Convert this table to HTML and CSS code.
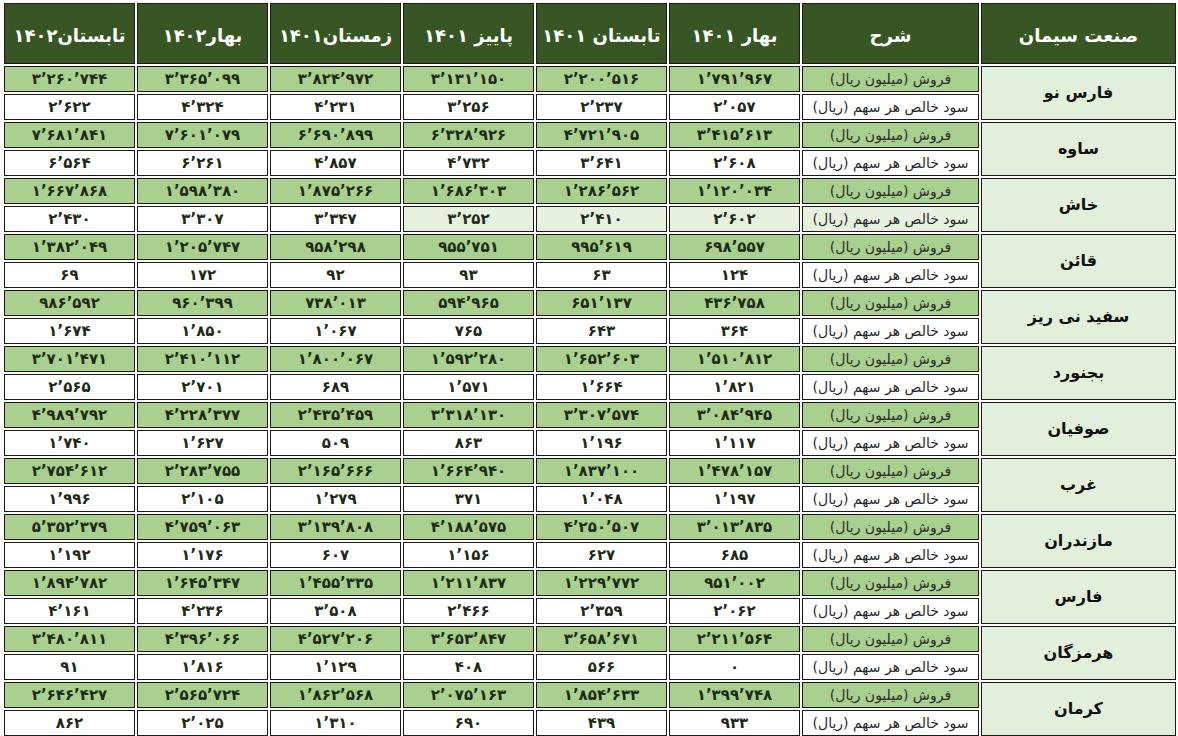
FILE: index.html
```html
<!DOCTYPE html>
<html lang="fa">
<head>
<meta charset="utf-8">
<title>صنعت سیمان</title>
<link rel="stylesheet" href="styles.css">
</head>
<body>
<table class="grid" dir="rtl">
<colgroup>
<col class="c-name"><col class="c-desc"><col class="c-num"><col class="c-num"><col class="c-num"><col class="c-num"><col class="c-num"><col class="c-num">
</colgroup>
<thead>
<tr><th>صنعت سیمان</th><th>شرح</th><th>بهار ۱۴۰۱</th><th>تابستان ۱۴۰۱</th><th>پاییز ۱۴۰۱</th><th>زمستان۱۴۰۱</th><th>بهار۱۴۰۲</th><th>تابستان۱۴۰۲</th></tr>
</thead>
<tbody>
<tr class="sales"><td class="name" rowspan="2">فارس نو</td><td class="desc">فروش (میلیون ریال)</td><td class="n">۱’۷۹۱’۹۶۷</td><td class="n">۲’۲۰۰’۵۱۶</td><td class="n">۳’۱۳۱’۱۵۰</td><td class="n">۳’۸۲۴’۹۷۲</td><td class="n">۳’۳۶۵’۰۹۹</td><td class="n">۳’۲۶۰’۷۴۴</td></tr>
<tr class="eps"><td class="desc">سود خالص هر سهم (ریال)</td><td class="n">۲’۰۵۷</td><td class="n">۲’۲۳۷</td><td class="n">۳’۲۵۶</td><td class="n">۴’۲۳۱</td><td class="n">۴’۳۲۴</td><td class="n">۲’۶۲۲</td></tr>

<tr class="sales"><td class="name" rowspan="2">ساوه</td><td class="desc">فروش (میلیون ریال)</td><td class="n">۳’۴۱۵’۶۱۳</td><td class="n">۴’۷۲۱’۹۰۵</td><td class="n">۶’۳۲۸’۹۲۶</td><td class="n">۶’۶۹۰’۸۹۹</td><td class="n">۷’۶۰۱’۰۷۹</td><td class="n">۷’۶۸۱’۸۴۱</td></tr>
<tr class="eps"><td class="desc">سود خالص هر سهم (ریال)</td><td class="n">۲’۶۰۸</td><td class="n">۳’۶۴۱</td><td class="n">۴’۷۳۲</td><td class="n">۴’۸۵۷</td><td class="n">۶’۲۶۱</td><td class="n">۶’۵۶۴</td></tr>

<tr class="sales"><td class="name" rowspan="2">خاش</td><td class="desc">فروش (میلیون ریال)</td><td class="n">۱’۱۲۰’۰۳۴</td><td class="n">۱’۲۸۶’۵۶۲</td><td class="n">۱’۶۸۶’۳۰۳</td><td class="n">۱’۸۷۵’۲۶۶</td><td class="n">۱’۵۹۸’۳۸۰</td><td class="n">۱’۶۶۷’۸۶۸</td></tr>
<tr class="eps"><td class="desc tint">سود خالص هر سهم (ریال)</td><td class="n tint">۲’۶۰۲</td><td class="n tint">۲’۴۱۰</td><td class="n tint">۳’۲۵۲</td><td class="n">۳’۳۴۷</td><td class="n">۳’۳۰۷</td><td class="n">۲’۴۳۰</td></tr>

<tr class="sales"><td class="name" rowspan="2">قائن</td><td class="desc">فروش (میلیون ریال)</td><td class="n">۶۹۸’۵۵۷</td><td class="n">۹۹۵’۶۱۹</td><td class="n">۹۵۵’۷۵۱</td><td class="n">۹۵۸’۲۹۸</td><td class="n">۱’۲۰۵’۷۴۷</td><td class="n">۱’۳۸۲’۰۴۹</td></tr>
<tr class="eps"><td class="desc">سود خالص هر سهم (ریال)</td><td class="n">۱۲۴</td><td class="n">۶۳</td><td class="n">۹۳</td><td class="n">۹۲</td><td class="n">۱۷۲</td><td class="n">۶۹</td></tr>

<tr class="sales"><td class="name" rowspan="2">سفید نی ریز</td><td class="desc">فروش (میلیون ریال)</td><td class="n">۴۳۶’۷۵۸</td><td class="n">۶۵۱’۱۳۷</td><td class="n">۵۹۴’۹۶۵</td><td class="n">۷۳۸’۰۱۳</td><td class="n">۹۶۰’۳۹۹</td><td class="n">۹۸۶’۵۹۲</td></tr>
<tr class="eps"><td class="desc">سود خالص هر سهم (ریال)</td><td class="n">۳۶۴</td><td class="n">۶۴۳</td><td class="n">۷۶۵</td><td class="n">۱’۰۶۷</td><td class="n">۱’۸۵۰</td><td class="n">۱’۶۷۴</td></tr>

<tr class="sales"><td class="name" rowspan="2">بجنورد</td><td class="desc">فروش (میلیون ریال)</td><td class="n">۱’۵۱۰’۸۱۲</td><td class="n">۱’۶۵۲’۶۰۳</td><td class="n">۱’۵۹۲’۲۸۰</td><td class="n">۱’۸۰۰’۰۶۷</td><td class="n">۲’۴۱۰’۱۱۲</td><td class="n">۳’۷۰۱’۴۷۱</td></tr>
<tr class="eps"><td class="desc">سود خالص هر سهم (ریال)</td><td class="n">۱’۸۲۱</td><td class="n">۱’۶۶۴</td><td class="n">۱’۵۷۱</td><td class="n">۶۸۹</td><td class="n">۲’۷۰۱</td><td class="n">۲’۵۶۵</td></tr>

<tr class="sales"><td class="name" rowspan="2">صوفیان</td><td class="desc">فروش (میلیون ریال)</td><td class="n">۳’۰۸۴’۹۴۵</td><td class="n">۳’۳۰۷’۵۷۴</td><td class="n">۳’۳۱۸’۱۳۰</td><td class="n">۲’۴۳۵’۴۵۹</td><td class="n">۴’۲۲۸’۳۷۷</td><td class="n">۴’۹۸۹’۷۹۲</td></tr>
<tr class="eps"><td class="desc">سود خالص هر سهم (ریال)</td><td class="n">۱’۱۱۷</td><td class="n">۱’۱۹۶</td><td class="n">۸۶۳</td><td class="n">۵۰۹</td><td class="n">۱’۶۲۷</td><td class="n">۱’۷۴۰</td></tr>

<tr class="sales"><td class="name" rowspan="2">غرب</td><td class="desc">فروش (میلیون ریال)</td><td class="n">۱’۴۷۸’۱۵۷</td><td class="n">۱’۸۳۷’۱۰۰</td><td class="n">۱’۶۶۴’۹۴۰</td><td class="n">۲’۱۶۵’۶۶۶</td><td class="n">۲’۲۸۳’۷۵۵</td><td class="n">۲’۷۵۴’۶۱۲</td></tr>
<tr class="eps"><td class="desc">سود خالص هر سهم (ریال)</td><td class="n">۱’۱۹۷</td><td class="n">۱’۰۴۸</td><td class="n">۳۷۱</td><td class="n">۱’۲۷۹</td><td class="n">۲’۱۰۵</td><td class="n">۱’۹۹۶</td></tr>

<tr class="sales"><td class="name" rowspan="2">مازندران</td><td class="desc">فروش (میلیون ریال)</td><td class="n">۳’۰۱۳’۸۳۵</td><td class="n">۴’۲۵۰’۵۰۷</td><td class="n">۴’۱۸۸’۵۷۵</td><td class="n">۳’۱۳۹’۸۰۸</td><td class="n">۴’۷۵۹’۰۶۳</td><td class="n">۵’۳۵۲’۳۷۹</td></tr>
<tr class="eps"><td class="desc">سود خالص هر سهم (ریال)</td><td class="n">۶۸۵</td><td class="n">۶۲۷</td><td class="n">۱’۱۵۶</td><td class="n">۶۰۷</td><td class="n">۱’۱۷۶</td><td class="n">۱’۱۹۲</td></tr>

<tr class="sales"><td class="name" rowspan="2">فارس</td><td class="desc">فروش (میلیون ریال)</td><td class="n">۹۵۱’۰۰۲</td><td class="n">۱’۲۲۹’۷۷۲</td><td class="n">۱’۲۱۱’۸۳۷</td><td class="n">۱’۴۵۵’۳۳۵</td><td class="n">۱’۶۴۵’۳۴۷</td><td class="n">۱’۸۹۴’۷۸۲</td></tr>
<tr class="eps"><td class="desc">سود خالص هر سهم (ریال)</td><td class="n">۲’۰۶۲</td><td class="n">۲’۳۵۹</td><td class="n">۲’۴۶۶</td><td class="n">۳’۵۰۸</td><td class="n">۴’۲۳۶</td><td class="n">۴’۱۶۱</td></tr>

<tr class="sales"><td class="name" rowspan="2">هرمزگان</td><td class="desc">فروش (میلیون ریال)</td><td class="n">۲’۲۱۱’۵۶۴</td><td class="n">۳’۶۵۸’۶۷۱</td><td class="n">۳’۶۵۳’۸۴۷</td><td class="n">۴’۵۲۷’۲۰۶</td><td class="n">۴’۳۹۶’۰۶۶</td><td class="n">۳’۴۸۰’۸۱۱</td></tr>
<tr class="eps"><td class="desc">سود خالص هر سهم (ریال)</td><td class="n">۰</td><td class="n">۵۶۶</td><td class="n">۴۰۸</td><td class="n">۱’۱۲۹</td><td class="n">۱’۸۱۶</td><td class="n">۹۱</td></tr>

<tr class="sales"><td class="name" rowspan="2">کرمان</td><td class="desc">فروش (میلیون ریال)</td><td class="n">۱’۳۹۹’۷۴۸</td><td class="n">۱’۸۵۴’۶۳۳</td><td class="n">۲’۰۷۵’۱۶۳</td><td class="n">۱’۸۶۲’۵۶۸</td><td class="n">۲’۵۶۵’۷۲۴</td><td class="n">۲’۶۴۶’۴۲۷</td></tr>
<tr class="eps"><td class="desc">سود خالص هر سهم (ریال)</td><td class="n">۹۳۳</td><td class="n">۴۳۹</td><td class="n">۶۹۰</td><td class="n">۱’۳۱۰</td><td class="n">۲’۰۲۵</td><td class="n">۸۶۲</td></tr>
</tbody>
</table>
</body>
</html>
```

FILE: styles.css
```css
html, body {
  margin: 0;
  padding: 0;
  background: #ffffff;
  overflow: hidden;
}

body {
  font-family: "DejaVu Sans", sans-serif;
  color: #1c1c1c;
}

.grid {
  margin: 1px 0 0 2px;
  width: 1176px;
  table-layout: fixed;
  border-collapse: separate;
  border-spacing: 2px;
}

.c-name { width: 195px; }
.c-desc { width: 177px; }
.c-num { width: 131px; }

.grid th,
.grid td {
  box-sizing: border-box;
  border: 1px solid #1a1a1a;
  padding: 0 4px;
  text-align: center;
  vertical-align: middle;
  white-space: nowrap;
  overflow: hidden;
}

.grid th {
  height: 61px;
  padding-top: 3px;
  background: #375623;
  color: #ffffff;
  font-size: 18px;
  font-weight: bold;
}

.grid td {
  height: 26px;
  line-height: 22px;
}

.sales td {
  background: #a9d08e;
}

.eps td {
  background: #ffffff;
}

.grid td.name {
  background: #e2efda;
  font-size: 16px;
  font-weight: bold;
  color: #111111;
}

.grid td.tint {
  background: #e6f1df;
}

.desc {
  font-size: 14px;
  color: #2a2a2a;
}

.n {
  direction: ltr;
  font-size: 15px;
  font-weight: bold;
  color: #1e2a18;
}
```
